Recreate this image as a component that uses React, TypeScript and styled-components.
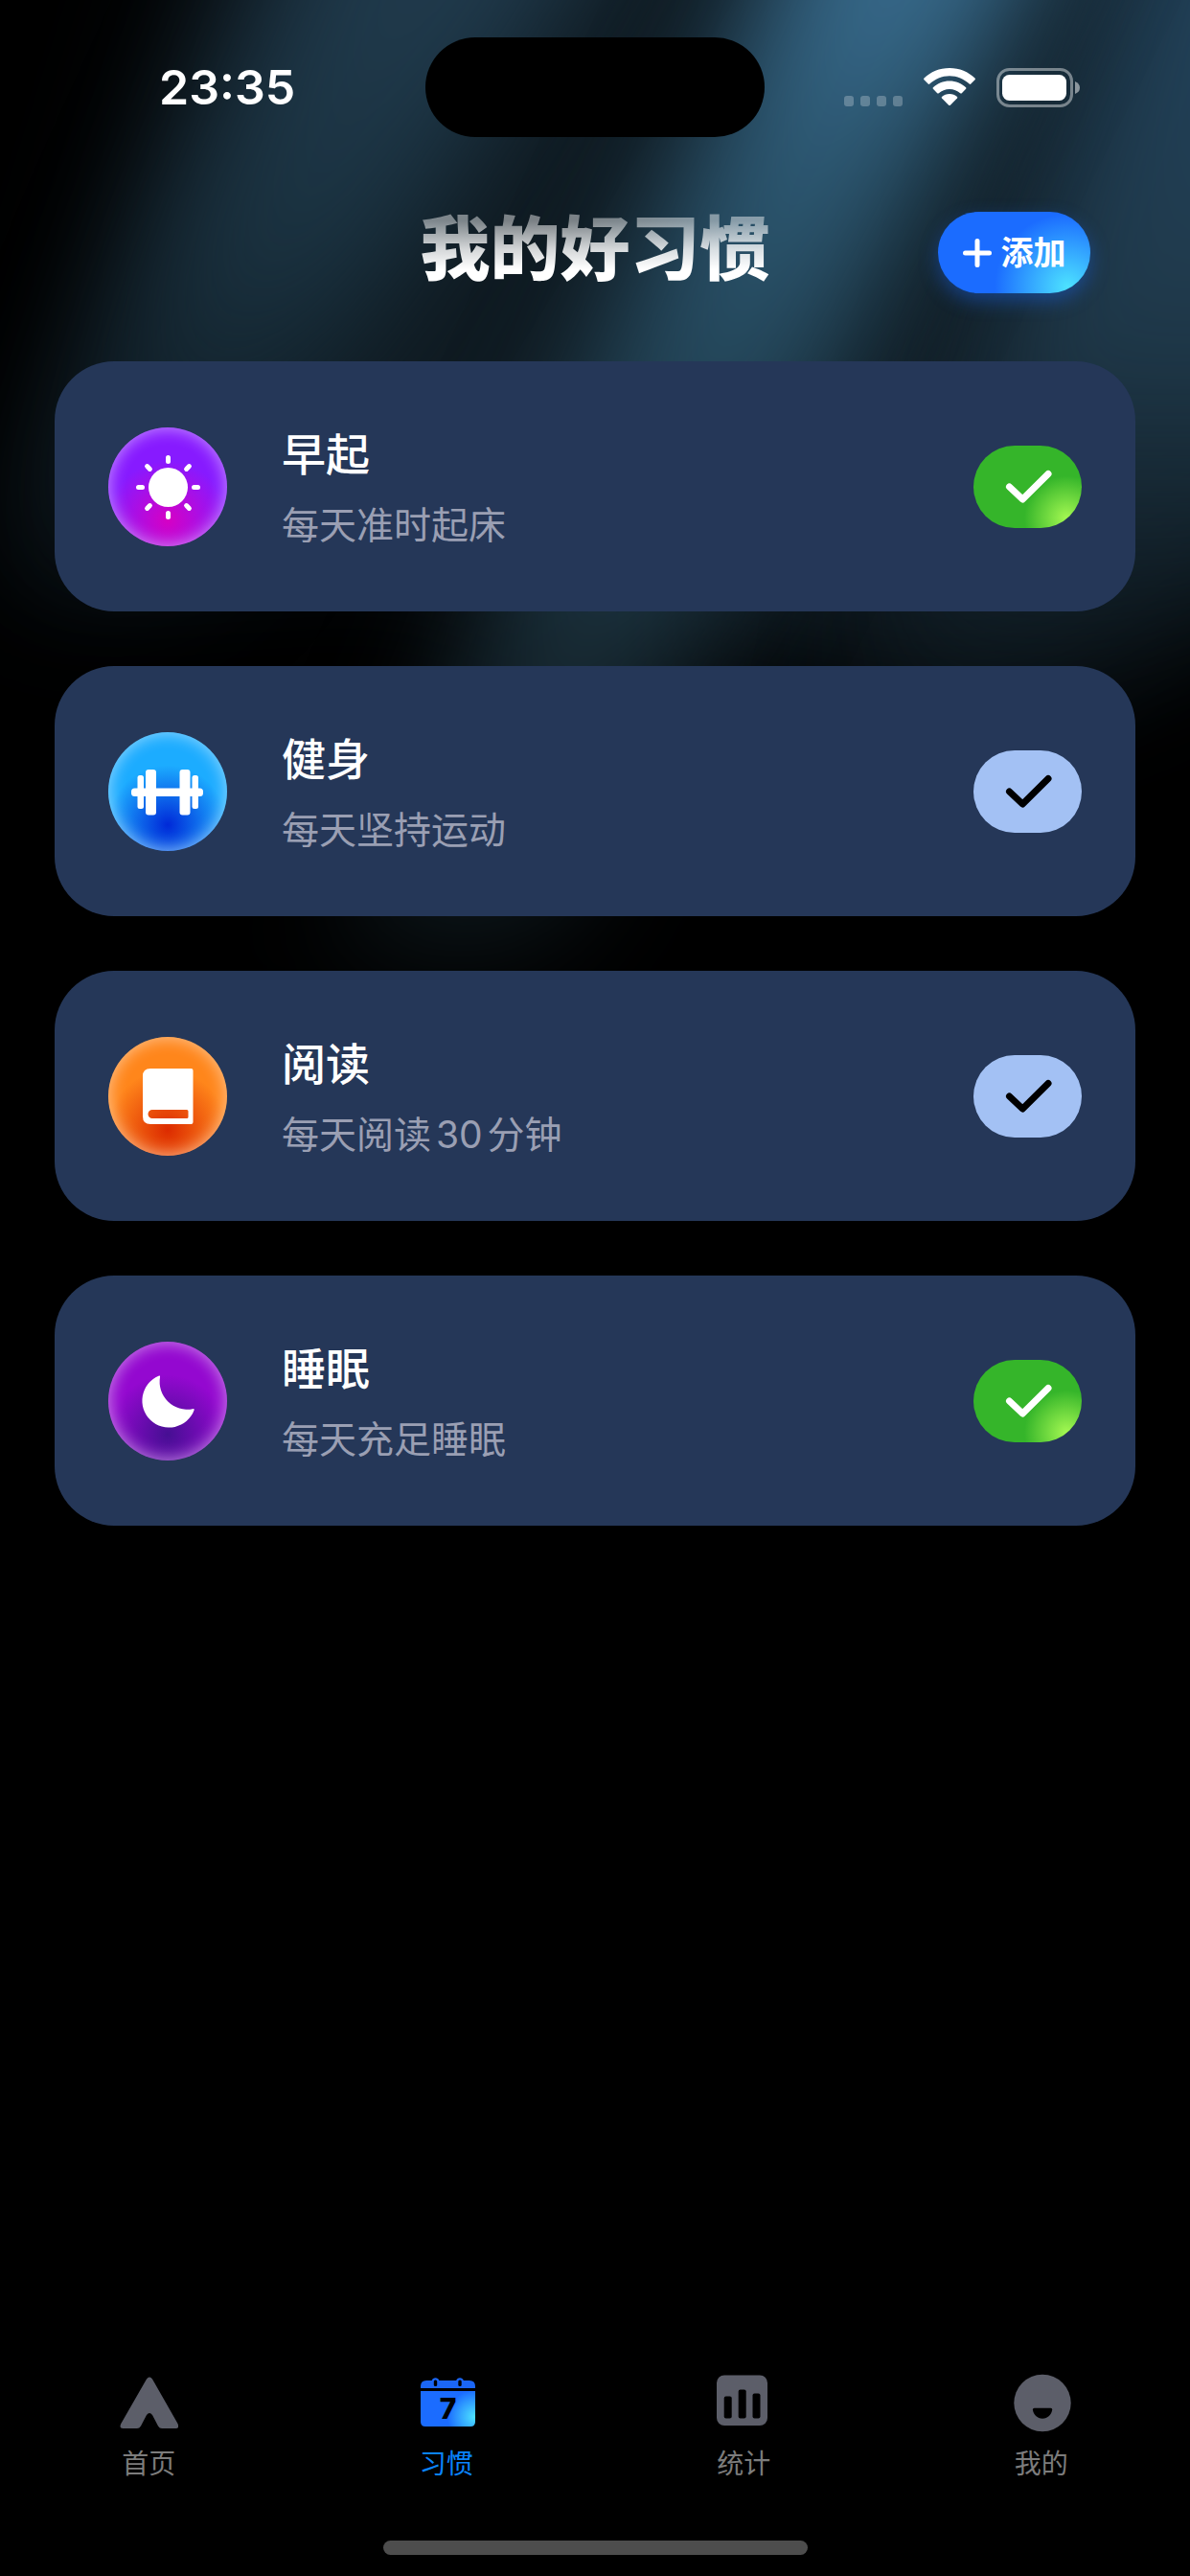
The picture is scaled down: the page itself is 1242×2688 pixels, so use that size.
import React, { useState } from "react";
import styled, { createGlobalStyle, css } from "styled-components";

const GlobalStyle = createGlobalStyle`
  *, *::before, *::after { box-sizing: border-box; }
  body {
    margin: 0;
    background: #000;
    color: #fff;
    font-family: Inter, "Noto Sans CJK SC", sans-serif;
  }
  h1, h2, p, ul { margin: 0; padding: 0; }
  ul { list-style: none; }
`;

const Page = styled.div`
  position: relative;
  isolation: isolate;
  display: flex;
  flex-direction: column;
  min-height: 100vh;
  overflow: hidden;
`;

const Backdrop = styled.svg`
  position: absolute;
  z-index: -1;
  top: 0;
  left: 0;
  width: 100%;
  height: 1100px;
`;

/* ---------- status bar ---------- */

const StatusBar = styled.div`
  display: grid;
  grid-template-columns: 1fr 354px 1fr;
  align-items: center;
  padding-top: 39px;
`;

const Clock = styled.time`
  padding-left: 166px;
  font-size: 50px;
  line-height: 60px;
  font-weight: 600;
`;

const Island = styled.div`
  height: 104px;
  border-radius: 52px;
  background: #000;
`;

const StatusIcons = styled.div`
  display: flex;
  justify-content: flex-end;
  align-items: center;
  gap: 22px;
  padding-right: 115px;
`;

const Signal = styled.div`
  display: flex;
  align-self: flex-end;
  gap: 7px;
  padding-bottom: 1px;
`;

const SignalDot = styled.span`
  width: 10px;
  height: 11px;
  border-radius: 3px;
  background: rgba(255, 255, 255, 0.25);
`;

/* ---------- header ---------- */

const Header = styled.header`
  display: grid;
  grid-template-columns: 1fr auto 1fr;
  align-items: center;
  padding: 78px 104px 71px;
`;

const Title = styled.h1`
  grid-column: 2;
  padding-bottom: 8px;
  font-size: 73px;
  line-height: 76px;
  font-weight: 900;
  color: transparent;
  background: linear-gradient(
    rgba(255, 255, 255, 0.45) 10%,
    rgba(255, 255, 255, 0.82) 45%,
    #fff 70%
  );
  -webkit-background-clip: text;
  background-clip: text;
`;

const AddButton = styled.button`
  justify-self: end;
  display: flex;
  align-items: center;
  justify-content: center;
  gap: 10px;
  width: 159px;
  height: 85px;
  padding: 0;
  border: 0;
  border-radius: 43px;
  color: #fff;
  font: 700 34px/44px Inter, "Noto Sans CJK SC", sans-serif;
  background: radial-gradient(circle 76px at 85% 92%, #4de2ff, #1b6cff) #1b6cff;
  box-shadow: 0 8px 20px rgba(27, 108, 255, 0.4);
  cursor: pointer;
`;

/* ---------- habit list ---------- */

const HabitList = styled.ul`
  display: flex;
  flex-direction: column;
  gap: 57px;
  padding: 0 57px;
`;

const Card = styled.li`
  display: flex;
  align-items: center;
  height: 261px;
  padding: 0 56px;
  border-radius: 62px;
  background: #253758;
`;

const Badge = styled.div<{ $core: string; $rim: string }>`
  display: flex;
  width: 124px;
  height: 124px;
  border-radius: 50%;
  background: radial-gradient(
    circle at 50% 78%,
    ${(p) => p.$core},
    ${(p) => p.$rim} 54%
  );
  box-shadow: inset 0 0 16px 2px rgba(255, 255, 255, 0.46);
`;

const HabitText = styled.div`
  flex: 1;
  padding: 4px 0 0 57px;
`;

const HabitName = styled.h2`
  margin-bottom: 16px;
  font-size: 46px;
  line-height: 60px;
  font-weight: 500;
`;

const HabitNote = styled.p`
  font-size: 39px;
  line-height: 56px;
  color: #9a9fb3;
  text-autospace: normal;
`;

const Toggle = styled.label`
  display: grid;
  width: 113px;
  height: 86px;
  color: #000;
  cursor: pointer;

  & > * {
    grid-area: 1 / 1;
  }

  & > svg {
    z-index: 1;
    pointer-events: none;
  }

  &:has(input:checked) {
    color: #fff;
  }
`;

const ToggleInput = styled.input`
  appearance: none;
  width: 100%;
  height: 100%;
  margin: 0;
  border-radius: 43px;
  background: #a3c1f4;

  &:checked {
    background: radial-gradient(circle 44px at 86% 88%, #a4f852, #35b52a) #35b52a;
  }
`;

/* ---------- tab bar ---------- */

const TabBar = styled.nav`
  display: grid;
  grid-template-columns: repeat(4, 1fr);
  margin-top: auto;
  padding-bottom: 63px;
`;

const Tab = styled.a<{ $active?: boolean }>`
  display: flex;
  flex-direction: column;
  align-items: center;
  gap: 16px;
  font-size: 28px;
  line-height: 34px;
  text-decoration: none;
  color: #7c7c7c;
  ${(p) =>
    p.$active &&
    css`
      color: #0a84ff;
    `}
`;

const HomeIndicator = styled.div`
  align-self: center;
  width: 443px;
  height: 15px;
  margin-bottom: 22px;
  border-radius: 8px;
  background: #4d4d4d;
`;

/* ---------- drawings ---------- */

const Beams = () => (
  <Backdrop viewBox="0 0 1242 1100" preserveAspectRatio="none" aria-hidden="true">
    <defs>
      <filter id="soft" x="-50%" y="-50%" width="200%" height="200%" colorInterpolationFilters="sRGB">
        <feGaussianBlur stdDeviation="60" />
      </filter>
      <filter id="softer" x="-50%" y="-50%" width="200%" height="200%" colorInterpolationFilters="sRGB">
        <feGaussianBlur stdDeviation="70" />
      </filter>
      <linearGradient id="main" gradientUnits="userSpaceOnUse" x1="0" y1="0" x2="0" y2="1040">
        <stop offset="0" stopColor="#37698a" />
        <stop offset="0.15" stopColor="#2d5872" />
        <stop offset="0.32" stopColor="#274c62" />
        <stop offset="0.5" stopColor="#1f3c4b" />
        <stop offset="0.64" stopColor="#192c36" />
        <stop offset="0.92" stopColor="#0c1519" />
        <stop offset="1" stopColor="#0a1215" stopOpacity="0" />
      </linearGradient>
      <linearGradient id="left" gradientUnits="userSpaceOnUse" x1="0" y1="0" x2="0" y2="680">
        <stop offset="0" stopColor="#203a4c" />
        <stop offset="0.4" stopColor="#1a313f" />
        <stop offset="1" stopColor="#10202a" stopOpacity="0" />
      </linearGradient>
      <linearGradient id="right" gradientUnits="userSpaceOnUse" x1="0" y1="0" x2="0" y2="820">
        <stop offset="0" stopColor="#22425a" />
        <stop offset="0.45" stopColor="#1f3849" />
        <stop offset="1" stopColor="#0c171c" stopOpacity="0" />
      </linearGradient>
    </defs>
    <path d="M270 -200H1460V480L1060 730L600 640L440 560L20 590Z" fill="#0f1a21" filter="url(#softer)" />
    <path d="M350 -150H680L180 660H-20Z" fill="url(#left)" filter="url(#soft)" />
    <path d="M1220 -150H1500V520L1100 780H880Z" fill="url(#right)" filter="url(#soft)" />
    <path d="M860 -150H1140L560 1010H340Z" fill="url(#main)" filter="url(#soft)" />
  </Backdrop>
);

const WifiIcon = () => (
  <svg width="54" height="40" viewBox="0 0 54 40" fill="#fff" aria-hidden="true">
    <path d="M27 0C16.600 0 7.200 4 0.500 10.600Q-0.300 11.500 0.500 12.300L4.700 16.600Q5.500 17.300 6.300 16.600C11.700 11.400 19 8.200 27 8.200S42.300 11.400 47.700 16.600Q48.500 17.300 49.300 16.600L53.500 12.300Q54.300 11.500 53.500 10.600C46.800 4 37.400 0 27 0Z" />
    <path d="M27 13.500C20.400 13.500 14.400 16 9.900 20.200Q9.100 21 9.900 21.800L14.200 26.200Q15 26.900 15.800 26.200C18.800 23.500 22.700 21.900 27 21.900S35.200 23.500 38.200 26.200Q39 26.900 39.800 26.200L44.100 21.800Q44.900 21 44.100 20.200C39.600 16 33.600 13.500 27 13.500Z" />
    <path d="M27 27C23.900 27 21.100 28.100 19 30Q18.300 30.700 19 31.500L26.200 38.700Q27 39.500 27.800 38.700L35 31.500Q35.700 30.700 35 30C32.900 28.100 30.100 27 27 27Z" />
  </svg>
);

const BatteryIcon = () => (
  <svg width="87" height="41" viewBox="0 0 87 41" aria-hidden="true">
    <rect x="1.500" y="1.500" width="77" height="38" rx="12" fill="none" stroke="#fff" strokeOpacity="0.42" strokeWidth="3" />
    <rect x="6" y="7" width="67" height="27" rx="7.500" fill="#fff" />
    <path d="M82 14Q87 16 87 20.500T82 27Z" fill="#fff" fillOpacity="0.5" />
  </svg>
);

const PlusIcon = () => (
  <svg width="30" height="30" viewBox="0 0 30 30" stroke="#fff" strokeWidth="5" strokeLinecap="round" aria-hidden="true">
    <path d="M15 2.500V27.500M2.500 15H27.500" />
  </svg>
);

const CheckIcon = () => (
  <svg width="113" height="86" viewBox="0 0 113 86" fill="none" stroke="currentColor" strokeWidth="7" strokeLinecap="round" strokeLinejoin="round" aria-hidden="true">
    <path d="M37.500 43L51.300 56L78 29.500" />
  </svg>
);

const SunIcon = () => (
  <svg width="124" height="124" viewBox="0 0 124 124" aria-hidden="true">
    <circle cx="62.500" cy="62.500" r="20.500" fill="#fff" />
    <g stroke="#fff" strokeWidth="5" strokeLinecap="round">
      {[0, 45, 90, 135, 180, 225, 270, 315].map((a) => (
        <path key={a} d="M62.500 31.500V35.500" transform={`rotate(${a} 62.500 62.500)`} />
      ))}
    </g>
  </svg>
);

const DumbbellIcon = () => (
  <svg width="124" height="124" viewBox="0 0 124 124" fill="#fff" aria-hidden="true">
    <rect x="24" y="58.500" width="75" height="8.500" rx="3.500" />
    <rect x="39" y="39" width="11" height="47.500" rx="3" />
    <rect x="74.500" y="39" width="11" height="47.500" rx="3" />
    <rect x="30.500" y="45" width="6.500" height="35" rx="2.500" />
    <rect x="87.500" y="45" width="6.500" height="35" rx="2.500" />
  </svg>
);

const BookIcon = () => (
  <svg width="124" height="124" viewBox="0 0 124 124" fill="#fff" fillRule="evenodd" aria-hidden="true">
    <path d="M44 33H86.500Q88.500 33 88.500 35V89Q88.500 91 86.500 91H44Q36 91 36 83V41Q36 33 44 33ZM46 76A4.500 4.500 0 0 0 46 85H82Q83.500 85 83.500 83.500V77.500Q83.500 76 82 76Z" />
  </svg>
);

const MoonIcon = () => (
  <svg width="124" height="124" viewBox="0 0 124 124" fill="#fff" aria-hidden="true">
    <path d="M52.500 35.800A28 28 0 1 0 89.600 71.500Q90 69.500 88 70.300A29 29 0 0 1 54 37Q54.500 35 52.500 35.800Z" />
  </svg>
);

const HomeIcon = () => (
  <svg width="62" height="62" viewBox="0 0 62 62" fill="#5c5e69" aria-hidden="true">
    <path d="M29 6.500Q32 2.500 35 6.500L61.500 53Q63.500 58 59.500 58H45Q42.500 58 41 55.500L35 44Q32 40 29 44L23 55.500Q21.500 58 19 58H4.500Q0 58 2.300 53Z" />
  </svg>
);

const CalendarIcon = () => (
  <svg width="62" height="62" viewBox="0 0 62 62" aria-hidden="true">
    <defs>
      <radialGradient id="cal" gradientUnits="userSpaceOnUse" cx="60" cy="46" r="28">
        <stop offset="0" stopColor="#4de2ff" />
        <stop offset="1" stopColor="#1b6cff" />
      </radialGradient>
    </defs>
    <path d="M4 16V14Q4 8 10 8H15.700A4 4 0 0 1 23.300 8H41.200A4 4 0 0 1 48.800 8H55Q61 8 61 14V16Z" fill="#1b66f5" />
    <path d="M4 19H61V51Q61 56 56 56H9Q4 56 4 51Z" fill="url(#cal)" />
    <rect x="17.800" y="7.500" width="3.400" height="6.500" rx="1.500" />
    <rect x="43.300" y="7.500" width="3.400" height="6.500" rx="1.500" />
    <text x="32.500" y="47.500" textAnchor="middle" fontFamily="Inter, sans-serif" fontSize="30" fontWeight="800">7</text>
  </svg>
);

const StatsIcon = () => (
  <svg width="62" height="62" viewBox="0 0 62 62" aria-hidden="true">
    <rect x="3" y="2.500" width="53" height="52.500" rx="8" fill="#5c5e69" />
    <rect x="10.700" y="24.500" width="8" height="23" rx="2" />
    <rect x="25.700" y="17.500" width="8" height="30" rx="2" />
    <rect x="40.500" y="21.500" width="8" height="26" rx="2" />
  </svg>
);

const ProfileIcon = () => (
  <svg width="62" height="62" viewBox="0 0 62 62" aria-hidden="true">
    <circle cx="32" cy="31.500" r="29.700" fill="#5c5e69" />
    <path d="M23.500 36.700H40.700Q42.300 36.700 42.200 38.500C41.600 43.500 37.500 47.700 32 47.700S22.500 43.500 21.900 38.500Q21.800 36.700 23.500 36.700Z" />
  </svg>
);

/* ---------- data ---------- */

const habits = [
  { name: "早起", note: "每天准时起床", icon: <SunIcon />, core: "#d600c4", rim: "#871aff", done: true },
  { name: "健身", note: "每天坚持运动", icon: <DumbbellIcon />, core: "#0029d8", rim: "#1cacff", done: false },
  { name: "阅读", note: "每天阅读30分钟", icon: <BookIcon />, core: "#dc2b00", rim: "#ff861b", done: false },
  { name: "睡眠", note: "每天充足睡眠", icon: <MoonIcon />, core: "#460f93", rim: "#9408d0", done: true },
];

const tabs = [
  { label: "首页", icon: <HomeIcon /> },
  { label: "习惯", icon: <CalendarIcon />, active: true },
  { label: "统计", icon: <StatsIcon /> },
  { label: "我的", icon: <ProfileIcon /> },
];

export default function App() {
  const [done, setDone] = useState(habits.map((h) => h.done));
  const toggle = (index: number) =>
    setDone((prev) => prev.map((value, i) => (i === index ? !value : value)));

  return (
    <>
      <GlobalStyle />
      <Page>
        <Beams />
        <StatusBar>
          <Clock>23:35</Clock>
          <Island />
          <StatusIcons>
            <Signal>
              <SignalDot />
              <SignalDot />
              <SignalDot />
              <SignalDot />
            </Signal>
            <WifiIcon />
            <BatteryIcon />
          </StatusIcons>
        </StatusBar>
        <Header>
          <Title>我的好习惯</Title>
          <AddButton type="button">
            <PlusIcon />
            添加
          </AddButton>
        </Header>
        <main>
          <HabitList>
            {habits.map((habit, i) => (
              <Card key={habit.name}>
                <Badge $core={habit.core} $rim={habit.rim}>
                  {habit.icon}
                </Badge>
                <HabitText>
                  <HabitName>{habit.name}</HabitName>
                  <HabitNote>{habit.note}</HabitNote>
                </HabitText>
                <Toggle>
                  <ToggleInput
                    type="checkbox"
                    aria-label={habit.name}
                    checked={done[i]}
                    onChange={() => toggle(i)}
                  />
                  <CheckIcon />
                </Toggle>
              </Card>
            ))}
          </HabitList>
        </main>
        <TabBar>
          {tabs.map((tab) => (
            <Tab key={tab.label} href="#" $active={tab.active} aria-current={tab.active ? "page" : undefined}>
              {tab.icon}
              <span>{tab.label}</span>
            </Tab>
          ))}
        </TabBar>
        <HomeIndicator />
      </Page>
    </>
  );
}
